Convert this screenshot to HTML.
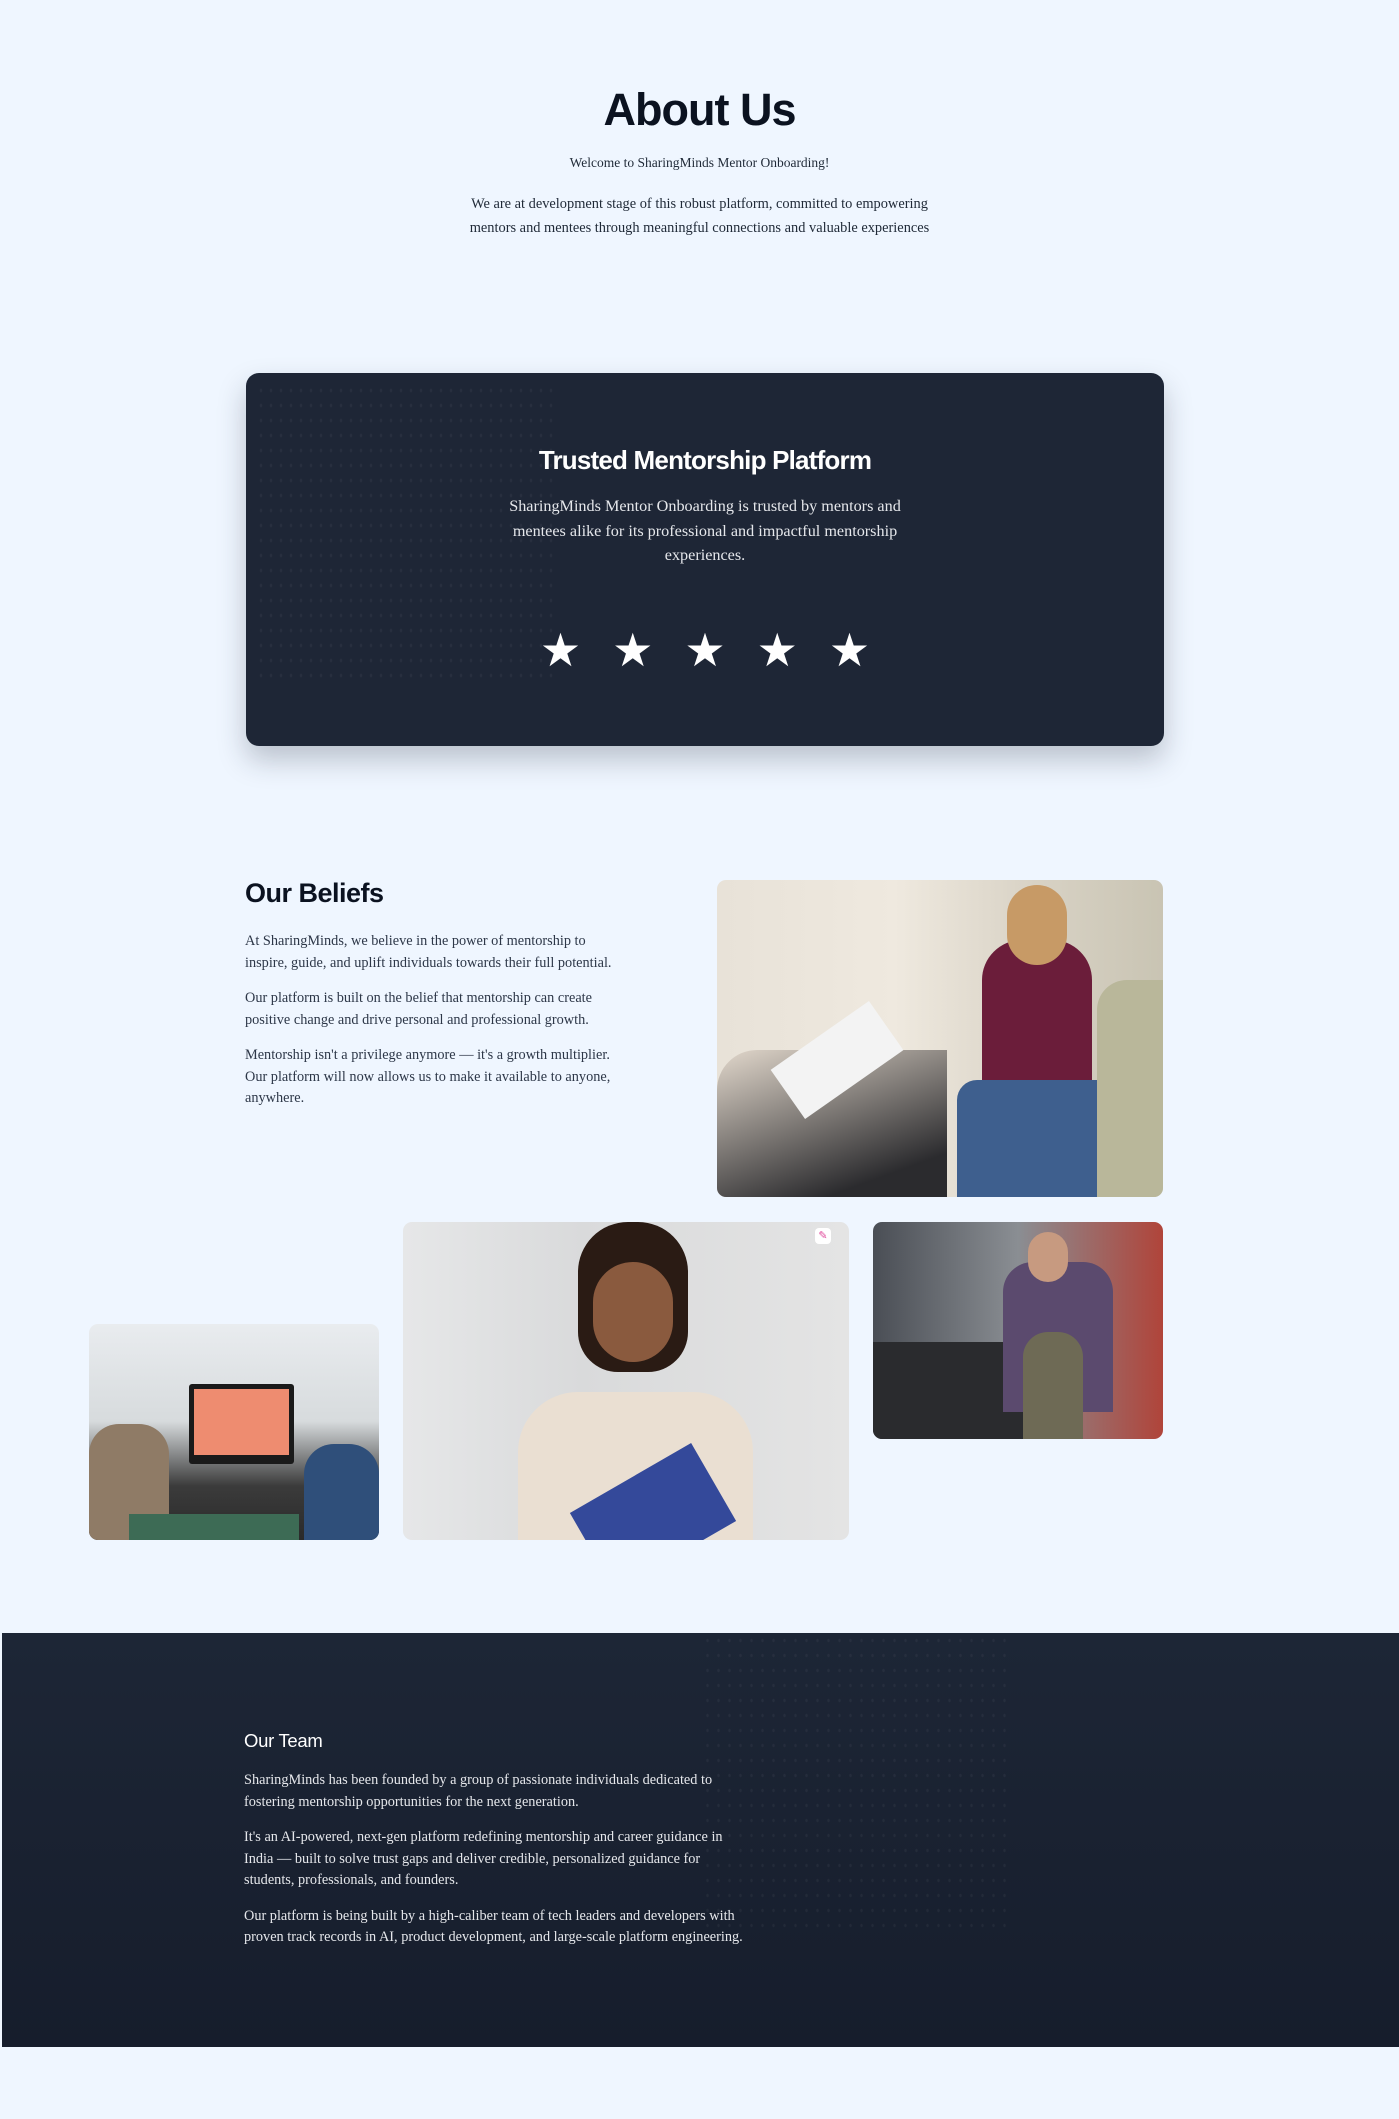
<!DOCTYPE html>
<html><head><meta charset="utf-8"><style>
*{margin:0;padding:0;box-sizing:border-box}
body{width:1399px;height:2119px;background:#eff6ff;position:relative;overflow:hidden;font-family:"Liberation Serif",serif;color:#2d3748}
.a{position:absolute}
.h{font-family:"Liberation Sans",sans-serif;font-weight:bold;color:#0b1220}
.c{text-align:center;left:0;width:1399px}
p{font-size:14.3px;line-height:21.5px}
.img{position:absolute;border-radius:9px;overflow:hidden}
</style></head><body>
<div class="a h c" style="top:84px;font-size:45px;letter-spacing:-1px">About Us</div>
<div class="a c" style="top:155px;font-size:13.5px;color:#1f2937">Welcome to SharingMinds Mentor Onboarding!</div>
<div class="a c" style="top:192px;font-size:14.4px;line-height:24px;color:#1f2937">We are at development stage of this robust platform, committed to empowering<br>mentors and mentees through meaningful connections and valuable experiences</div>

<div class="a" style="left:246px;top:373px;width:918px;height:373px;background:#1e2636;border-radius:13px;box-shadow:0 14px 28px rgba(30,38,54,.25)">
<div class="a" style="left:10px;top:10px;width:300px;height:300px;background-image:radial-gradient(rgba(255,255,255,.045) 1px,transparent 1.5px);background-size:10px 15px"></div>
<div class="a h" style="left:0;width:918px;text-align:center;top:72px;font-size:26px;color:#fff;letter-spacing:-.8px">Trusted Mentorship Platform</div>
<div class="a" style="left:0;width:918px;text-align:center;top:121px;font-size:16.2px;line-height:24.5px;color:#e5e7eb">SharingMinds Mentor Onboarding is trusted by mentors and<br>mentees alike for its professional and impactful mentorship<br>experiences.</div>
<div class="a" style="left:0;width:918px;text-align:center;top:250px;font-size:46px;color:#fff;letter-spacing:31px;padding-left:31px;font-family:'DejaVu Sans',sans-serif">★★★★★</div>
</div>

<div class="a h" style="left:245px;top:878px;font-size:27px;letter-spacing:-.5px">Our Beliefs</div>
<div class="a" style="left:245px;top:931px;width:420px">
<p>At SharingMinds, we believe in the power of mentorship to<br>inspire, guide, and uplift individuals towards their full potential.</p>
<p style="margin-top:14px">Our platform is built on the belief that mentorship can create<br>positive change and drive personal and professional growth.</p>
<p style="margin-top:14px">Mentorship isn't a privilege anymore — it's a growth multiplier.<br>Our platform will now allows us to make it available to anyone,<br>anywhere.</p>
</div>

<div class="img" style="left:717px;top:880px;width:446px;height:317px;background:linear-gradient(90deg,#e8e2d8 0%,#efe9df 40%,#d9d3c6 70%,#c9c4b3 100%)">
<div class="a" style="left:0;top:170px;width:230px;height:150px;background:linear-gradient(160deg,#e2d8cc,#2b2b2e 80%);border-radius:40px 0 0 0"></div>
<div class="a" style="left:60px;top:150px;width:120px;height:60px;background:#f3f3f3;transform:rotate(-35deg)"></div>
<div class="a" style="left:265px;top:60px;width:110px;height:180px;background:#6b1d3a;border-radius:40px 40px 10px 10px"></div>
<div class="a" style="left:290px;top:5px;width:60px;height:80px;background:#c79a66;border-radius:30px"></div>
<div class="a" style="left:240px;top:200px;width:160px;height:117px;background:#3e5f8e;border-radius:20px 20px 0 0"></div>
<div class="a" style="left:380px;top:100px;width:66px;height:217px;background:#b9b79a;border-radius:30px 0 0 0"></div>
</div>

<div class="img" style="left:89px;top:1324px;width:290px;height:216px;background:linear-gradient(180deg,#e9ecef 0%,#d7dbdd 45%,#3b3b3b 75%,#2a2a2a 100%)">
<div class="a" style="left:100px;top:60px;width:105px;height:80px;background:#1a1a1a;border-radius:3px"></div>
<div class="a" style="left:105px;top:65px;width:95px;height:66px;background:#ee8c70"></div>
<div class="a" style="left:0;top:100px;width:80px;height:116px;background:#8f7b66;border-radius:30px 30px 0 0"></div>
<div class="a" style="left:215px;top:120px;width:75px;height:96px;background:#2f4f7a;border-radius:30px 30px 0 0"></div>
<div class="a" style="left:40px;top:190px;width:170px;height:26px;background:#3d6b55"></div>
</div>

<div class="img" style="left:403px;top:1222px;width:446px;height:318px;background:linear-gradient(90deg,#e6e7e8,#d9dadb 40%,#e4e4e4 100%)">
<div class="a" style="left:175px;top:0;width:110px;height:150px;background:#2a1b14;border-radius:50px 50px 40px 40px"></div>
<div class="a" style="left:190px;top:40px;width:80px;height:100px;background:#8a5a3e;border-radius:40px"></div>
<div class="a" style="left:115px;top:170px;width:235px;height:148px;background:#eadfd2;border-radius:60px 60px 0 0"></div>
<div class="a" style="left:180px;top:250px;width:140px;height:90px;background:#34499a;transform:rotate(-30deg)"></div>
</div>
<div class="a" style="left:815px;top:1228px;width:16px;height:16px;background:#fff;border-radius:4px;color:#e0499b;font-size:11px;text-align:center;line-height:16px;font-family:'DejaVu Sans',sans-serif">✎</div>

<div class="img" style="left:873px;top:1222px;width:290px;height:217px;background:linear-gradient(90deg,#4a4e55,#8a8e93 50%,#b0443a 100%)">
<div class="a" style="left:0;top:120px;width:200px;height:97px;background:#2a2b2e"></div>
<div class="a" style="left:130px;top:40px;width:110px;height:150px;background:#5b4a6e;border-radius:30px 30px 0 0"></div>
<div class="a" style="left:155px;top:10px;width:40px;height:50px;background:#c79a80;border-radius:20px"></div>
<div class="a" style="left:150px;top:110px;width:60px;height:107px;background:#6e6a55;border-radius:25px 25px 0 0"></div>
</div>

<div class="a" style="left:2px;top:1633px;width:1397px;height:414px;background:linear-gradient(180deg,#1d2636 0%,#161d2c 100%)">
<div class="a" style="left:700px;top:0;width:310px;height:300px;background-image:radial-gradient(rgba(255,255,255,.045) 1px,transparent 1.5px);background-size:11px 15px"></div>
<div class="a" style="left:242px;top:97px;font-family:'Liberation Sans',sans-serif;font-size:18.5px;color:#fff;letter-spacing:-.3px">Our Team</div>
<div class="a" style="left:242px;top:137px;width:600px;color:#e5e7eb">
<p>SharingMinds has been founded by a group of passionate individuals dedicated to<br>fostering mentorship opportunities for the next generation.</p>
<p style="margin-top:14px">It's an AI-powered, next-gen platform redefining mentorship and career guidance in<br>India — built to solve trust gaps and deliver credible, personalized guidance for<br>students, professionals, and founders.</p>
<p style="margin-top:14px">Our platform is being built by a high-caliber team of tech leaders and developers with<br>proven track records in AI, product development, and large-scale platform engineering.</p>
</div>
</div>
</body></html>
